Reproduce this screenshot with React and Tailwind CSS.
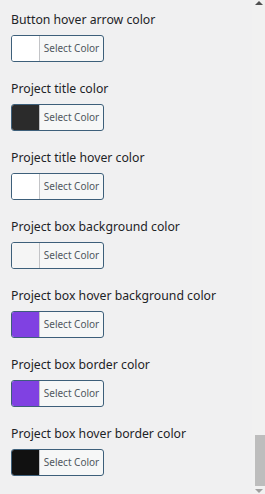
import React from 'react';

const items = [
  { label: 'Button hover arrow color', color: '#ffffff' },
  { label: 'Project title color', color: '#2b2b2b' },
  { label: 'Project title hover color', color: '#ffffff' },
  { label: 'Project box background color', color: '#f5f5f5' },
  { label: 'Project box hover background color', color: '#8041e2' },
  { label: 'Project box border color', color: '#8041e2' },
  { label: 'Project box hover border color', color: '#111111' },
];

function ColorField({ label, color }) {
  return (
    <div className="flex flex-col">
      <p className="text-[12.25px] leading-[18px] text-[#1d2327] mb-[6px]">{label}</p>
      <button className="flex items-stretch w-[93px] h-[27px] rounded-[3px] border border-[#3d5f7a] bg-[#f6f7f7] overflow-hidden p-0">
        <span className="w-[28px] border-r border-[#c3c4c7]" style={{ backgroundColor: color }} />
        <span className="flex-1 flex items-center justify-center text-[10px] text-[#50575e]">Select Color</span>
      </button>
    </div>
  );
}

export default function App() {
  return (
    <div className="flex w-[265px] h-[494px] bg-[#f0f0f1] overflow-hidden" style={{ fontFamily: '"Noto Sans", sans-serif' }}>
      <div className="flex-1 flex flex-col gap-[18px] pl-[11px] pt-[11px]">
        {items.map((it) => (
          <ColorField key={it.label} {...it} />
        ))}
      </div>
      <div className="w-[13px] flex flex-col items-center bg-[#f1f1f1]">
        <div className="mt-[1px] w-0 h-0 border-l-[4px] border-r-[4px] border-b-[4px] border-l-transparent border-r-transparent border-b-[#505050]" />
        <div className="flex-1" />
        <div className="w-[10px] h-[51px] ml-[2px] bg-[#bdbdbd]" />
        <div className="mt-[3px] mb-[1px] w-0 h-0 border-l-[4px] border-r-[4px] border-t-[4px] border-l-transparent border-r-transparent border-t-[#a0a0a0]" />
      </div>
    </div>
  );
}
